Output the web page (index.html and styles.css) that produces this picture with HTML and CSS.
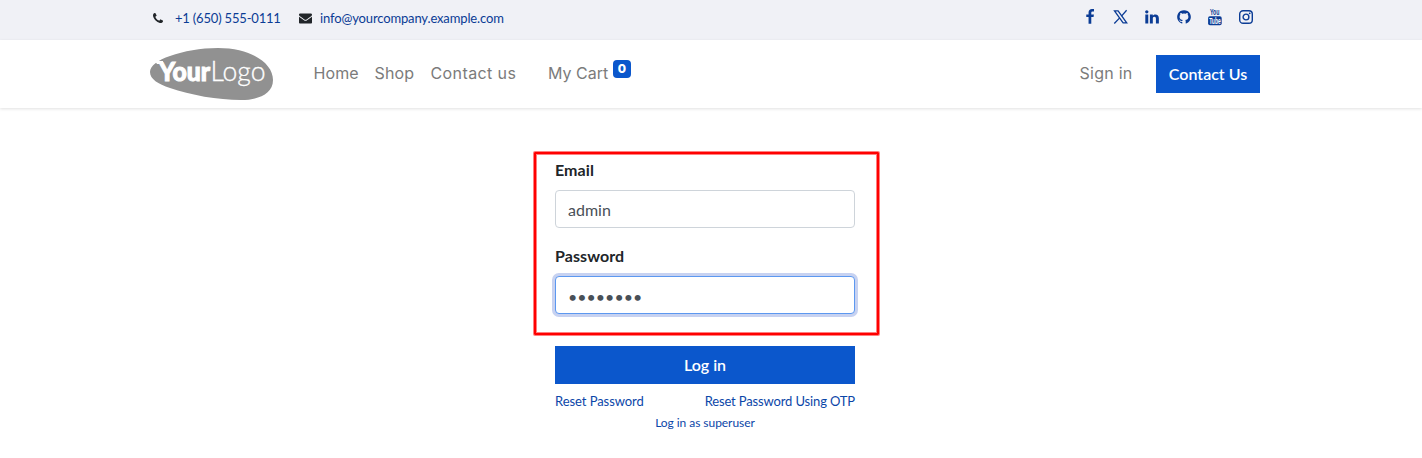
FILE: index.html
```html
<!DOCTYPE html>
<html lang="en">
<head>
<meta charset="utf-8">
<title>Login | My Website</title>
<link rel="stylesheet" href="styles.css">
</head>
<body>
<div class="topbar">
  <div class="contact">
    <svg class="phone" viewBox="0 128 1408 1408"><path d="M1408 1240q0 27-10 70.500t-21 68.500q-21 50-122 106-94 51-186 51-27 0-53-3.500t-57.500-12.500-47-14.500-55.500-20.500-49-18q-98-35-175-83-127-79-264-216t-216-264q-48-77-83-175-3-9-18-49t-20.500-55.500-14.500-47-12.500-57.500-3.500-53q0-92 51-186 56-101 106-122 25-11 68.500-21t70.500-10q14 0 21 3 18 6 53 76 11 19 30 54t35 63.500 31 53.500q3 4 17.500 25t21.500 35.500 7 28.500q0 20-28.500 50t-62 55-62 53-28.500 46q0 9 5 22.500t8.500 20.500 14 24 11.500 19q76 137 174 235t235 174q2 1 19 11.500t24 14 20.500 8.500 22.500 5q18 0 46-28.500t53-62 55-62 50-28.500q14 0 28.500 7t35.500 21.500 25 17.500q25 15 53.500 31t63.500 35 54 30q70 35 76 53 3 7 3 21z"/></svg>
    <a class="tel">+1 (650) 555-0111</a>
    <svg class="mail" viewBox="0 256 1792 1408"><path d="M1792 710v794q0 66-47 113t-113 47h-1472q-66 0-113-47t-47-113v-794q44 49 101 87 362 246 497 345 57 42 92.500 65.500t94.500 48 110 24.500h2q51 0 110-24.500t94.500-48 92.500-65.500q170-123 498-345 57-39 100-87zm0-294q0 79-49 151t-122 123q-376 261-468 325-10 7-42.500 31t-54 38.500-52 32.500-57.500 27-50 9h-2q-23 0-50-9t-57.500-27-52-32.500-54-38.500-42.500-31q-91-64-262-182.500t-205-142.500q-62-42-117-115.500t-55-136.500q0-78 41.500-130t118.500-52h1472q65 0 112.500 47t47.500 113z"/></svg>
    <a class="address">info@yourcompany.example.com</a>
  </div>
  <div class="social">
    <svg viewBox="0 0 1792 1792"><path d="M1343 12v264h-157q-86 0-116 36t-30 108v189h293l-39 296h-254v759h-306v-759h-255v-296h255v-218q0-186 104-288.500t277-102.500q147 0 228 12z"/></svg>
    <svg viewBox="0 0 16 16"><g fill="none" stroke="currentColor" stroke-width="1.300"><path d="M1.500 1.800h3.600l8.600 12h-3.600z"/><path d="M13.600 1.300 8.500 7.100M6.700 8.900 1.300 14.500"/></g></svg>
    <svg viewBox="0 0 1792 1792"><path d="M477 625v991h-330v-991h330zm21-306q1 73-50.500 122t-135.500 49h-2q-82 0-132-49t-50-122q0-74 51.500-122.500t134.500-48.500 133 48.500 51 122.500zm1166 729v568h-329v-530q0-105-40.500-164.500t-126.500-59.500q-63 0-105.500 34.500t-63.500 85.500q-11 30-11 81v553h-329q2-399 2-647t-1-296l-1-48h329v144h-2q20-32 41-56t56.500-52 87-43.500 114.500-15.500q171 0 275 113.500t104 332.500z"/></svg>
    <svg viewBox="0 0 1792 1792"><path d="M896 128q209 0 385.500 103t279.500 279.500 103 385.500q0 251-146.500 451.500t-378.500 277.500q-27 5-40-7t-13-30q0-3 .5-76.500t.5-134.500q0-97-52-142 57-6 102.500-18t94-39 81-66.500 53-105 20.500-150.500q0-119-79-206 37-91-8-204-28-9-81 11t-92 44l-38 24q-93-26-192-26t-192 26q-16-11-42.500-27t-83.500-38.500-85-13.500q-45 113-8 204-79 87-79 206 0 85 20.500 150t52.500 105 80.500 67 94 39 102.500 18q-39 36-49 103-21 10-45 15t-57 5-65.500-21.500-55.500-62.500q-19-32-48.500-52t-49.500-24l-20-3q-21 0-29 4.500t-5 11.500 9 14 13 12l7 5q22 10 43.500 38t31.500 51l10 23q13 38 44 61.500t67 30 69.500 7 55.500-3.500l23-4q0 38 .5 88.500t.5 54.500q0 18-13 30t-40 7q-232-77-378.500-277.500t-146.500-451.500q0-209 103-385.500t279.500-279.500 385.500-103z"/></svg>
    <svg viewBox="0 0 16 16"><text class="you" x="3" y="6.300" textLength="9.500" lengthAdjust="spacingAndGlyphs">You</text><rect x="1.100" y="7.300" width="13.600" height="9" rx="1.800"/><text class="tube" x="2.200" y="14.900" textLength="11.500" lengthAdjust="spacingAndGlyphs">Tube</text></svg>
    <svg viewBox="0 0 16 16"><g fill="none" stroke="currentColor" stroke-width="1.400"><rect x="1.700" y="1.700" width="12.600" height="12.600" rx="3.400"/><circle cx="8" cy="8" r="2.900"/></g><circle cx="11.700" cy="4.300" r=".9"/></svg>
  </div>
</div>
<header class="header">
  <svg class="logo" viewBox="0 0 123 52"><path d="M0 24C0 18 8 12 20 8C34 3 50 0 68 0C101 0 123 15 123 32C123 46 108 52 91 52C68 52 40 47 20 40C8 36 0 31 0 24Z"/><path class="logo-tick" d="M5 13h8v3H7z"/><text class="logo-bold" x="9" y="33" textLength="51" lengthAdjust="spacingAndGlyphs">Your</text><text class="logo-thin" x="60.500" y="33" textLength="55" lengthAdjust="spacingAndGlyphs">Logo</text></svg>
  <nav class="nav">
    <a class="home">Home</a><a class="shop">Shop</a><a class="contact-link">Contact us</a><a class="cart">My Cart</a><span class="badge">0</span>
  </nav>
  <a class="signin">Sign in</a>
  <a class="cta">Contact Us</a>
</header>
<main class="login">
  <div class="highlight"></div>
  <label for="login">Email</label>
  <input id="login" type="text" value="admin">
  <label for="password">Password</label>
  <input id="password" class="focused" type="password" value="password">
  <button type="button">Log in</button>
  <div class="links"><a>Reset Password</a><a class="otp">Reset Password Using OTP</a></div>
  <a class="superuser">Log in as superuser</a>
</main>
</body>
</html>
```
FILE: styles.css
```css
* { box-sizing: border-box; }
body { margin: 0; background: #fff; color: #212529; font: 16px/24px Lato, sans-serif; }
svg { display: block; fill: currentColor; flex: none; overflow: visible; }

.topbar { height: 40px; padding: 0 168px 0 153px; background: #f0f1f6; display: flex; justify-content: space-between; }
.contact { display: flex; align-items: center; height: 36px; font-size: 13px; letter-spacing: -.14px; color: #0b3c95; }
.phone { width: 10px; height: 10px; color: #212529; margin-right: 12px; }
.tel { width: 124px; white-space: nowrap; letter-spacing: -.19px; }
.mail { width: 13px; height: 11px; color: #212529; margin-right: 8px; }
.social { display: flex; align-items: center; gap: 15.200px; height: 34px; color: #0b3c95; }
.social svg { width: 16px; height: 16px; }
.you { font: 700 8.5px "Liberation Sans", sans-serif; }
.tube { font: 700 8.5px "Liberation Sans", sans-serif; fill: #fff; }

.header { height: 68px; padding: 0 162px 0 150px; display: flex; align-items: center; box-shadow: 0 1px 3px rgba(0, 0, 0, .12); color: #7b7b7b; font: 16px/24px Inter, sans-serif; }
.logo { width: 123px; height: 52px; color: #919191; }
.logo-bold { font: 900 26px Lato, sans-serif; fill: #fff; stroke: #fff; stroke-width: 1px; }
.logo-thin { font: 300 27px Lato, sans-serif; fill: #fff; stroke: #fff; stroke-width: .3px; }
.logo-tick { fill: #fff; }
.nav { display: flex; align-items: center; margin: -2px 0 0 40px; white-space: nowrap; }
.home { width: 61.500px; letter-spacing: .1px; padding-left: .5px; }
.shop { width: 56px; letter-spacing: .15px; }
.contact-link { width: 117.500px; letter-spacing: .4px; }
.cart { width: 65px; }
.badge { width: 18px; height: 18px; margin-top: -8px; border-radius: 4px; background: #0b57cc; color: #fff; font: 800 12px/18px Inter, sans-serif; text-align: center; }
.signin { margin: -2px 23.500px 0 auto; letter-spacing: .25px; }
.cta { width: 104px; height: 38px; background: #0b57cc; color: #fff; font: 600 16px/37px Lato, sans-serif; text-align: center; }

.login { position: relative; width: 300px; margin: 50px 0 0 555px; display: flex; flex-direction: column; }
.highlight { position: absolute; left: -21px; top: -6px; width: 345px; height: 183px; border: 2px solid #f00; border-radius: 1px; box-shadow: 0 0 0 1px rgba(255, 0, 0, .5), inset 0 0 0 1px rgba(255, 0, 0, .5); pointer-events: none; }
label { font-weight: 700; margin-bottom: 8px; letter-spacing: .08px; }
input { height: 38px; margin: 0 0 16px; padding: 0 12px; border: 1px solid #ced4da; border-radius: 4px; outline: 0; background: #fff; color: #495057; font: 16px/24px Lato, sans-serif; }
input.focused { padding-top: 2px; border-color: #5c98f0; box-shadow: 0 0 0 3px #c7d2f1; margin-bottom: 32px; }
button { height: 38px; border: 0; padding: 0 0 1px; background: #0b57cc; color: #fff; font: 600 16px/24px Lato, sans-serif; }
.links { display: flex; justify-content: space-between; height: 20px; margin-top: 7px; font-size: 13px; line-height: 20px; letter-spacing: -.06px; color: #0b46a8; }
.otp { letter-spacing: -.14px; }
.superuser { margin-top: 3px; text-align: center; font-size: 12px; line-height: 18px; color: #0b46a8; letter-spacing: -.05px; }
```
